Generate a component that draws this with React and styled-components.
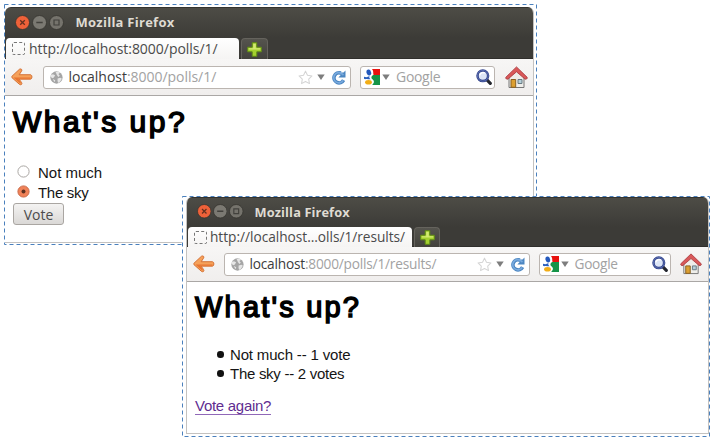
import React from "react";
import styled, { createGlobalStyle, ThemeProvider } from "styled-components";

const GlobalStyle = createGlobalStyle`
  * { box-sizing: border-box; }
  body { margin: 0; background: #fff; }
`;

const ui = `"Open Sans", "Noto Sans", sans-serif`;
const px = (key) => ({ theme }) => `${theme[key]}px`;

/* Dimensions of the two windows; the results window is slightly smaller. */
const pollSize = {
  width: 529, height: 236, edge: 0, titleH: 31, tabH: 21, toolH: 37,
  knob: 15, knobGap: 2, knobPad: 9.5, titleX: 10, titleFont: 13, titleLs: 0.26,
  tabW: 233, tabPad: 6, tabFont: 14, tabLs: -0.03, tabGap: 4, plusW: 27,
  barPad: 6, backW: 22, urlX: 10, urlW: 308, urlLs: -0.03, googleLs: -0.3, searchX: 9, searchW: 135, homeX: 10, home: 23,
};
const resultSize = {
  width: 523, height: 237, edge: 1, titleH: 30, tabH: 20, toolH: 35,
  knob: 14.5, knobGap: 1.8, knobPad: 9.7, titleX: 9, titleFont: 12.8, titleLs: 0.1,
  tabW: 224, tabPad: 6, tabFont: 13.7, tabLs: -0.02, tabGap: 3, plusW: 26,
  barPad: 6, backW: 22, urlX: 9, urlW: 306, urlLs: -0.21, googleLs: -0.3, searchX: 8.5, searchW: 132, homeX: 9.5, home: 22,
};

const Desktop = styled.main`
  position: relative;
  width: 715px;
  height: 442px;
  overflow: hidden;
  background: #fff;
`;

const Selection = styled.section`
  position: absolute;
  left: ${(p) => p.$x}px;
  top: ${(p) => p.$y}px;
  width: ${(p) => p.$w}px;
  height: ${(p) => p.$h}px;
  background: #fff;
`;

const Dashes = styled.svg`
  position: absolute;
  inset: 0;
  width: 100%;
  height: 100%;
  rect { fill: none; stroke: #4a80bd; stroke-width: 1; stroke-dasharray: 4 3; }
`;

const Window = styled.article`
  position: absolute;
  left: ${(p) => p.$x}px;
  top: ${(p) => p.$y}px;
  width: ${px("width")};
  height: ${px("height")};
  display: flex;
  flex-direction: column;
  border-radius: 6px 6px 0 0;
  background: #fff;
  border: solid #c4c2c0;
  border-width: 0 1px 1px ${px("edge")};
  overflow: hidden;
`;

const Frame = styled.header`
  background: linear-gradient(#4d4c46, #3c3b37 60%);
  border-top: 1px solid #35342f;
  border-bottom: 1px solid #2f2e2b;
  height: ${({ theme }) => theme.titleH + theme.tabH}px;
  flex: none;
`;

const TitleBar = styled.div`
  height: ${({ theme }) => theme.titleH - 1}px;
  display: flex;
  align-items: center;
  gap: ${px("knobGap")};
  padding: 0 0 2px ${px("knobPad")};
`;

const Knob = styled.svg`
  width: ${px("knob")};
  height: ${px("knob")};
  flex: none;
`;

const Title = styled.h2`
  margin: 0 0 0 ${px("titleX")};
  font: bold ${px("titleFont")}/18px ${ui};
  letter-spacing: ${px("titleLs")};
  color: #dfdbd2;
  white-space: nowrap;
`;

const Tabs = styled.nav`
  height: ${({ theme }) => theme.tabH}px;
  display: flex;
  gap: 2px;
  padding-left: 1px;
`;

const Tab = styled.div`
  width: ${px("tabW")};
  height: 100%;
  display: flex;
  align-items: center;
  gap: ${px("tabGap")};
  padding-left: ${px("tabPad")};
  border-radius: 4px 4px 0 0;
  background: linear-gradient(#fff, #f5f4f3);
  font: ${px("tabFont")}/20px ${ui};
  letter-spacing: ${px("tabLs")};
  color: #4a4a4a;
  white-space: nowrap;
`;

const Favicon = styled.span`
  width: 13px;
  height: 13px;
  flex: none;
  border: 1px dashed #777;
  border-radius: 2px;
`;

const NewTab = styled.div`
  width: ${px("plusW")};
  height: 100%;
  display: grid;
  place-items: center;
  border: 1px solid #65635d;
  border-bottom: 0;
  border-radius: 4px 4px 0 0;
  background: linear-gradient(#55544e, #42413c);
`;

const Toolbar = styled.div`
  height: ${px("toolH")};
  flex: none;
  display: flex;
  align-items: center;
  padding-left: ${px("barPad")};
  background: linear-gradient(#f7f6f5, #f0eeed);
  border-bottom: 1px solid #aaa7a5;
`;

const Field = styled.div`
  width: ${({ theme, $search }) => ($search ? theme.searchW : theme.urlW)}px;
  margin-left: ${({ theme, $search }) => ($search ? theme.searchX : theme.urlX)}px;
  height: 23px;
  flex: none;
  display: flex;
  align-items: center;
  padding: 0 ${(p) => (p.$search ? 2 : 4)}px 0 ${(p) => (p.$search ? 3 : 6)}px;
  border: 1px solid #bbb5b0;
  border-radius: 3px;
  background: #fff;
  font: ${px("tabFont")}/20px ${ui};
  letter-spacing: ${({ theme, $search }) => ($search ? theme.googleLs : theme.urlLs)}px;
  color: #a2a2a2;
  white-space: nowrap;
`;

const FieldText = styled.span`
  flex: 1;
  margin-left: ${(p) => p.$gap}px;
`;

const Host = styled.span`
  color: #3c3c3c;
`;

const Icon = styled.svg`
  width: ${(p) => p.$w}px;
  height: ${(p) => p.$h || p.$w}px;
  margin-left: ${(p) => p.$ml || 0}px;
  flex: none;
  display: block;
`;

const Page = styled.div`
  flex: 1;
  padding: ${(p) => p.$pad};
  font: 15px/20px "Liberation Sans", Arial, sans-serif;
  color: #151515;
`;

const Heading = styled.h1`
  margin: 0;
  font-size: ${(p) => p.$size}px;
  font-weight: 400;
  -webkit-text-stroke: 1.5px #000;
  line-height: 34px;
  letter-spacing: ${(p) => p.$ls}px;
  color: #000;
  white-space: nowrap;
`;

const Choices = styled.div`
  margin-top: 23px;
  padding-left: 4px;
`;

const Choice = styled.label`
  display: flex;
  align-items: center;
  height: 20.5px;
  padding-top: 1px;
  gap: 8px;
  letter-spacing: ${(p) => p.$ls}px;
`;

const Radio = styled.svg`
  width: 13px;
  height: 13px;
  margin-top: -3px;
  flex: none;
`;

const VoteButton = styled.button`
  display: block;
  margin: 0;
  width: 51px;
  height: 22px;
  padding: 0;
  border: 1px solid #aaa6a2;
  border-radius: 3px;
  background: linear-gradient(#f4f3f2, #dad8d6);
  color: #4c4c4c;
  font: 14px/19px ${ui};
`;

const Results = styled.ul`
  margin: 21px 0 0;
  padding: 0 0 0 22px;
  list-style: none;
`;

const Result = styled.li`
  display: flex;
  align-items: center;
  gap: 6.5px;
  height: 19px;
  letter-spacing: ${(p) => p.$ls}px;
  &::before {
    content: "";
    width: 6.5px;
    height: 6.5px;
    border-radius: 50%;
    background: #111;
  }
`;

const Again = styled.a`
  display: inline-block;
  margin-top: 14px;
  line-height: 17px;
  color: #5f2d91;
  border-bottom: 1.4px solid #9068b8;
  letter-spacing: ${(p) => p.$ls}px;
`;

function Controls() {
  return (
    <>
      <Knob viewBox="0 0 15 15">
        <circle cx="7.5" cy="7.5" r="7" fill="#ee6139" stroke="#37352f" strokeWidth=".8" />
        <path d="M5.2 5.2l4.6 4.6M9.8 5.2L5.2 9.8" stroke="#65301f" strokeWidth="1.3" />
      </Knob>
      <Knob viewBox="0 0 15 15">
        <circle cx="7.5" cy="7.5" r="7" fill="#7b7972" stroke="#35342f" strokeWidth=".8" />
        <path d="M4.3 7.5h6.4" stroke="#42413c" strokeWidth="1.3" />
      </Knob>
      <Knob viewBox="0 0 15 15">
        <circle cx="7.5" cy="7.5" r="7" fill="#75736c" stroke="#35342f" strokeWidth=".8" />
        <path d="M5 5h5v5H5z" fill="none" stroke="#42413c" strokeWidth="1.2" />
      </Knob>
    </>
  );
}

const Plus = () => (
  <Icon $w={15} viewBox="0 0 15 15">
    <path d="M5.2.7h4.6v4.5h4.5v4.6H9.8v4.5H5.2V9.8H.7V5.2h4.5z" fill="#a4d02f" stroke="#5f8a16" />
    <path d="M6.2 1.7h2.6v4.5h4.5v1.2H1.7V6.2h4.5z" fill="#d3ea72" />
  </Icon>
);

const Back = () => (
  <Icon $w={22} $h={18} viewBox="0 0 22 18">
    <path
      d="M8.5 1.2c1.7-1 3.1.6 2 2L8.2 6.7h11.2c2 0 2 4.5 0 4.5H8.2l2.3 3.2c1.1 1.5-.3 3.1-2 2L1 9.7c-.5-.5-.5-1 0-1.5z"
      fill="#f5a15a" stroke="#d16a2d" strokeWidth=".9"
    />
    <path d="M2.5 9.500h17v1.200h-12l2.200 3.700c.3.8-.3 1.200-1 .7z" fill="#e87532" />
  </Icon>
);

const Globe = () => (
  <Icon $w={13} viewBox="0 0 14 14">
    <circle cx="7" cy="7" r="6.6" fill="#a5a5a5" />
    <path d="M1 4.2l2.2-.8 2.3 1.3L4.2 7l-2 .7L.7 6zM6 1l3-.4 2 1.200-2 1.400 1.600 2L8.900 6.500 7.300 4zM8.200 8.200l3-.9 1.600 1-2 3.200-2 1.500-.7-2.200zM3 8.700l2.700 1.200-.9 2.200z" fill="#e6e6e6" />
  </Icon>
);

const Star = () => (
  <Icon $w={15} viewBox="0 0 16 16">
    <path d="M8 1.2l2.1 4.4 4.8.7-3.5 3.4.8 4.8L8 12.2l-4.2 2.3.8-4.8L1.1 6.3l4.8-.7z" fill="#fff" stroke="#d4d4d4" strokeWidth="1.1" strokeLinejoin="round" />
  </Icon>
);

const Caret = ({ ml }) => (
  <Icon $w={8} $h={6} $ml={ml} viewBox="0 0 8 6">
    <path d="M.3.5h7.4L4 6z" fill="#7d7d7d" />
  </Icon>
);

const Reload = () => (
  <Icon $w={15} $ml={6} viewBox="0 0 15 15">
    <path d="M12.6 10.200A5.100 5.100 0 1 1 9.800 3" fill="none" stroke="#4d87c2" strokeWidth="3.600" />
    <path d="M14.500.5v7H7.400l2.300-2.400L8 3.500l2.800-1L12.500 2.500z" fill="#4d87c2" />
    <path d="M12.200 10.400A5.100 5.100 0 1 1 10.300 3.300L12.500 5" fill="none" stroke="#79aade" strokeWidth="1.600" />
  </Icon>
);

const Google = () => (
  <Icon $w={16} viewBox="0 0 16 16">
    <path d="M8 0h8v6H9.700C8.800 5 10 2.500 8 0z" fill="#e8120e" />
    <path d="M9.300 6H16v10H8.200c2.300-2.300 2.500-4.400-.4-6.200C7 8.500 7.400 7 9.300 6z" fill="#159447" />
    <ellipse cx="4.800" cy="3.500" rx="2.300" ry="3.100" transform="rotate(-15 4.800 3.500)" fill="#2459bd" />
    <path d="M0 7.800c2 .5 3.500.6 5.500-.7-.6 1.400 0 2.500 1 3.200-2 .1-3.800-.8-5.300 0L0 9.800z" fill="#2c60bd" />
    <ellipse cx="4.500" cy="13.300" rx="3.400" ry="2.300" fill="#f2ad16" />
  </Icon>
);

const Search = () => (
  <Icon $w={16} viewBox="0 0 16 16">
    <path d="M10.700 10.700l3.600 3.600" stroke="#24262e" strokeWidth="3.200" strokeLinecap="round" />
    <circle cx="6.800" cy="6.800" r="5.300" fill="#dce5f6" stroke="#34448a" strokeWidth="2.500" />
    <path d="M3.800 6.400a3.200 3.200 0 0 1 5-2.200" fill="none" stroke="#fff" strokeWidth="1.500" />
    <circle cx="6.800" cy="6.800" r="5.400" fill="none" stroke="#6a7fc0" strokeWidth=".7" />
  </Icon>
);

const Home = ({ size, ml }) => (
  <Icon $w={size} $ml={ml} viewBox="0 0 23 23">
    <path d="M4 10.500L11.500 4l7.500 6.500v11H4z" fill="#efeeea" stroke="#777" />
    <path d="M6 13.500h4.700v7.800H6z" fill="#dda031" stroke="#896022" />
    <path d="M13 13.500h4v4h-4z" fill="#b5cfd9" stroke="#687b83" />
    <path d="M11.500.9L.8 11.300c-.4 1.500 1 2.300 2.300 1.700l8.400-7.200 8.400 7.200c1.300.6 2.700-.2 2.300-1.700z" fill="#d9595a" stroke="#a43237" strokeWidth=".8" />
  </Icon>
);

function Browser({ size, x, y, tab, path, children }) {
  return (
    <ThemeProvider theme={size}>
      <Window $x={x} $y={y}>
        <Frame>
          <TitleBar><Controls /><Title>Mozilla Firefox</Title></TitleBar>
          <Tabs>
            <Tab><Favicon /><span>{tab}</span></Tab>
            <NewTab><Plus /></NewTab>
          </Tabs>
        </Frame>
        <Toolbar>
          <Back />
          <Field>
            <Globe />
            <FieldText $gap={5.5}><Host>localhost</Host>{path}</FieldText>
            <Star /><Caret ml={4} /><Reload />
          </Field>
          <Field $search>
            <Google /><Caret ml={2} />
            <FieldText $gap={6}>Google</FieldText>
            <Search />
          </Field>
          <Home size={size.home} ml={size.homeX} />
        </Toolbar>
        {children}
      </Window>
    </ThemeProvider>
  );
}

export default function App() {
  return (
    <Desktop>
      <GlobalStyle />
      <Selection $x={4} $y={4} $w={533} $h={241}>
        <Browser size={pollSize} x={1} y={3} tab="http://localhost:8000/polls/1/" path=":8000/polls/1/">
          <Page $pad="9px 8px 0">
            <Heading $size={30} $ls={2.5}>What's up?</Heading>
            <Choices>
              <Choice $ls={0}>
                <Radio viewBox="0 0 13 13"><circle cx="6.5" cy="6.5" r="5.600" fill="#fff" stroke="#aaa6a3" /></Radio>
                Not much
              </Choice>
              <Choice $ls={-0.3}>
                <Radio viewBox="0 0 13 13">
                  <circle cx="6.5" cy="6.5" r="5.600" fill="#f08258" stroke="#c96a49" />
                  <circle cx="6.5" cy="6.5" r="2" fill="#5c3020" />
                </Radio>
                The sky
              </Choice>
            </Choices>
            <VoteButton>Vote</VoteButton>
          </Page>
        </Browser>
        <Dashes><rect x=".5" y=".5" width="532" height="240" /></Dashes>
      </Selection>
      <Selection $x={182} $y={196} $w={528} $h={241}>
        <Browser size={resultSize} x={4} y={1} tab="http://localhost…olls/1/results/" path=":8000/polls/1/results/">
          <Page $pad="8px 8px 0">
            <Heading $size={29} $ls={2.2}>What's up?</Heading>
            <Results>
              <Result $ls={-0.17}>Not much -- 1 vote</Result>
              <Result $ls={-0.28}>The sky -- 2 votes</Result>
            </Results>
            <Again $ls={-0.28}>Vote again?</Again>
          </Page>
        </Browser>
        <Dashes><rect x=".5" y=".5" width="527" height="240" /></Dashes>
      </Selection>
    </Desktop>
  );
}
